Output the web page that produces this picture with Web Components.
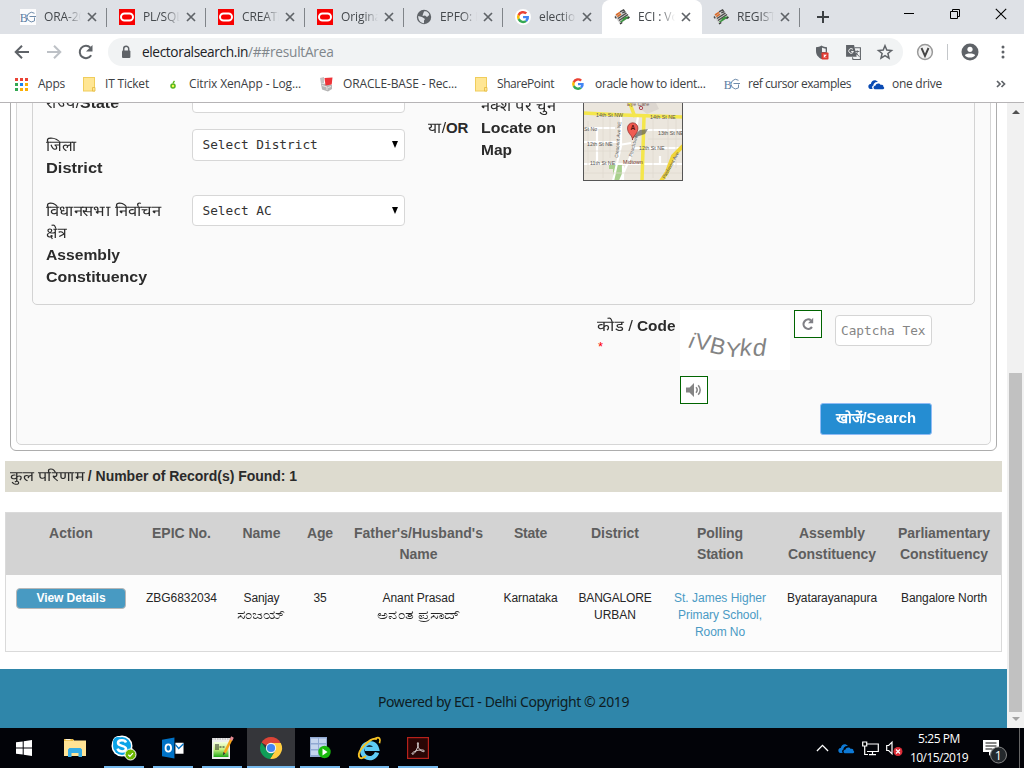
<!DOCTYPE html>
<html lang="en"><head><meta charset="utf-8"><title>Electoral Search</title>
<style>html,body{margin:0;height:100%;overflow:hidden;background:#fff}</style></head>
<body><desktop-screen></desktop-screen>
<script>
const UI='"Open Sans","Noto Sans",sans-serif', AR='"Liberation Sans",sans-serif';
function define(name, html, after){
  customElements.define(name, class extends HTMLElement{
    connectedCallback(){
      if(this.shadowRoot) return;
      const r=this.attachShadow({mode:'open'});
      r.innerHTML=typeof html==='function'?html(this):html;
      if(after) after(this,r);
    }
  });
}
// Text run set to a given advance width.
define('fit-text','<style>:host{display:inline-block;white-space:nowrap;text-align:left}span{display:inline-block;white-space:pre}</style><span><slot></slot></span>',(el,r)=>{
  const w=parseFloat(el.getAttribute('w')), s=r.querySelector('span');
  const n=Array.from(el.textContent).length;
  const nat=s.getBoundingClientRect().width;
  el.style.width=w+'px';
  if(!nat) return;
  if(el.hasAttribute('squeeze')){s.style.transformOrigin='0 50%';s.style.transform=`scaleX(${w/nat})`;}
  else s.style.letterSpacing=((w-nat)/Math.max(1,n))+'px';
});
const G=`<path fill="#ea4335" d="M3 7 1 4.500A8 8 0 0 1 13.300 2.200L11 4.500A4.800 4.800 0 0 0 3.700 6.200z"/><path fill="#fbbc05" d="M1 4.400A8 8 0 0 0 1 11.600L3.700 9.600A5 5 0 0 1 3.700 6.400z"/><path fill="#34a853" d="M1 11.500A8 8 0 0 0 13.200 14L10.600 12A4.800 4.800 0 0 1 3.700 9.500z"/><path fill="#4285f4" d="M8 6.600h7.600A8 8 0 0 1 13.200 14L10.600 12A4 4 0 0 0 12.200 9.700H8z"/>`;
const BC=`<rect width="16" height="16" fill="#fff" opacity=".9"/><text x="-.3" y="12.500" font-family="Liberation Serif,serif" font-size="13" fill="#5b7ba2" textLength="8" lengthAdjust="spacingAndGlyphs">B</text><path d="M14.500 4.300a4.700 4.700 0 1 0 0 7.600V8.500M9.500 7.500H16" fill="none" stroke="#6f8cab" stroke-width="1"/>`;
const IC={
 bc:['0 0 16 16',BC],
 oracle:['0 0 16 16','<rect width="16" height="16" fill="#f80000"/><rect x="2" y="4.500" width="12" height="7" rx="3.500" fill="none" stroke="#fff" stroke-width="2"/>'],
 globe:['0 0 16 16','<circle cx="8" cy="8" r="7.200" fill="#5f6368"/><path d="M8 2.500c3-.7 5 1.500 5.300 3.500L11 8 9 6.500 6.500 7l.5-2zM2.200 7l3.800 1 3 2-1 1.500v2.700C4.500 14 2 11 2.200 7z" fill="#dee1e6"/>'],
 google:['0 0 16 16','<circle cx="8" cy="8" r="8" fill="#fff"/><g transform="translate(1.800 1.800) scale(.78)">'+G+'</g>'],
 gplain:['0 0 16 16',G],
 eci:['0 0 16 16','<path d="M.5 7 10 .8 15.500 8 6 15z" fill="#cfcfcf"/><path d="M2 6 6 3.300M3.300 7.600 7 5.200" stroke="#d96b2b" stroke-width="1.600"/><path d="M6 2.800 9.500.8 10.500 2.200M1 7.500l1.200 1.800M8.300 3.800 11.500 2.600M4 9.500 12.500 4M5 11.500 14 5.500" stroke="#4a4a4a" stroke-width="1.400" fill="none"/><path d="M6.500 13.200 14.800 7.600M8.500 10.700l4-2.800" stroke="#3c9540" stroke-width="1.600"/><path d="M6 15l2.300-1.500M13.500 9.800 15.500 8" stroke="#333" stroke-width="1.300"/>'],
 close:['0 0 16 16','<path d="M4 4l8 8M12 4l-8 8" stroke="#5f6368" stroke-width="1.700"/>'],
 plus:['0 0 16 16','<path d="M8 2v12M2 8h12" stroke="#3c4043" stroke-width="2"/>'],
 min:['0 0 12 12','<path d="M1 5.500h10" stroke="#000"/>'],
 max:['0 0 12 12','<path d="M3.500 3.500v-2h7v7h-2M1.500 3.500h7v7h-7z" fill="none" stroke="#000"/>'],
 x:['0 0 12 12','<path d="M.8.8l10.400 10.400M11.200.8.8 11.200" stroke="#000" stroke-width="1.100"/>'],
 back:['0 0 16 16','<path d="M15 8H2M8 1.700 1.700 8 8 14.300" fill="none" stroke="#5f6368" stroke-width="2"/>'],
 fwd:['0 0 16 16','<path d="M1 8h13M8 1.700 14.300 8 8 14.300" fill="none" stroke="#bdc1c6" stroke-width="2"/>'],
 reload:['0 0 16 16','<path d="M13.200 11.300A6.200 6.200 0 1 1 12.400 3.600" fill="none" stroke="#5f6368" stroke-width="2"/><path d="M14.500 1v6.500H8z" fill="#5f6368"/>'],
 lock:['0 0 16 16','<rect x="4" y="6.500" width="8.400" height="7.500" rx="1" fill="#5f6368"/><path d="M5.700 7V4.800a2.500 2.500 0 0 1 5 0V7" fill="none" stroke="#5f6368" stroke-width="1.500"/>'],
 shield:['0 0 16 16','<path d="M7.500 1.500C9 2.800 11 3.200 13 3.200V7c0 4-2.500 6.500-5.500 8C4.500 13.500 2 11 2 7V3.200c2 0 4-.4 5.500-1.700z" fill="#5f6368"/><path d="M8 3.500c1 .7 2.500 1 3.700 1.200V8H8z" fill="#f1f3f4"/><rect x="7.500" y="8.500" width="7" height="7" rx=".8" fill="#e0392f"/><path d="M9.700 10.700l2.600 2.600M12.300 10.700l-2.600 2.600" stroke="#fff" stroke-width="1.100"/>'],
 translate:['0 0 16 16','<path d="M1 1h7.500l2.500 11H1z" fill="#5f6368"/><path d="M9 3.500h5.500v11H7.500L7 12.500" fill="none" stroke="#5f6368" stroke-width="1"/><path d="M7.500 5.200A2.200 2.200 0 1 0 7.900 7H5.800" fill="none" stroke="#fff" stroke-width=".9"/><path d="M9.500 7h4M11.500 6v1.200c0 2-1 3-2 4M10.500 8.500l3 3.500" stroke="#5f6368" stroke-width=".9" fill="none"/>'],
 star:['0 0 16 16','<path d="M8 1.800l1.800 4.300 4.700.4-3.600 3 1.100 4.600L8 11.700l-4 2.400 1.100-4.600-3.600-3 4.700-.4z" fill="none" stroke="#5f6368" stroke-width="1.500"/>'],
 vee:['0 0 18 18','<circle cx="9" cy="9" r="7.400" fill="#f2f2f2" stroke="#999" stroke-width="1.500"/><path d="M5.500 5 9 13 12.500 5" fill="none" stroke="#444" stroke-width="1.900"/>'],
 user:['0 0 18 18','<circle cx="9" cy="9" r="8.500" fill="#5f6368"/><circle cx="9" cy="6.300" r="2.600" fill="#fff"/><path d="M3.800 12.200c1-2.200 9.400-2.200 10.400 0-2 3.200-8.400 3.200-10.400 0z" fill="#fff"/>'],
 dots:['0 0 4 14','<circle cx="2" cy="2" r="1.500" fill="#5f6368"/><circle cx="2" cy="7" r="1.500" fill="#5f6368"/><circle cx="2" cy="12" r="1.500" fill="#5f6368"/>'],
 apps:['0 0 13 13','<path d="M0 0h3v3H0zM5 0h3v3H5zM10 0h3v3h-3z" fill="#ea4335"/><path d="M0 5h3v3H0z" fill="#34a853"/><path d="M5 5h3v3H5z" fill="#1a82f0"/><path d="M10 5h3v3h-3zM5 10h3v3H5zM10 10h3v3h-3z" fill="#fbaf05"/><path d="M0 10h3v3H0z" fill="#34a853"/>'],
 note:['0 0 13 15','<rect x=".5" y=".5" width="11" height="13.500" fill="#ffe694" stroke="#f0cd5c"/><path d="M9.500 14v-3.500h2.500V14z" fill="#ffe694" stroke="#e4b93c" stroke-width=".8"/>'],
 citrix:['0 0 8 12','<circle cx="4" cy="8" r="2" fill="#f4fa50" stroke="#55b51d" stroke-width="1.500"/><path d="M4 5 5.500 3" stroke="#55b51d" stroke-width="1.300"/>'],
 obase:['0 0 16 16','<path d="M1 2l4-1v6l-3 1z" fill="#c4c4c4"/><path d="M2 8l5-.5 6 1.500v4l-4 2.500L3 13.500z" fill="#b5b5b5"/><path d="M3 9.500l5 1.500v3M9 11.500l3-1" stroke="#e4e4e4" fill="none"/><path d="M5.500 2 13.500 1.500l-.8 7-6.200 1z" fill="#ee3338"/>'],
 cloud:['0 0 18 12','<path d="M1 10.500C-.5 8 1 6 3 6 3.500 2 8 .5 10.500 4c-3-.5-5 2-4.700 3.500C4 8 4 10 5 11.200H2z" fill="currentColor"/><path d="M7 11.500c-2-1-1-3.800.8-3.600C8.500 5 12 4.500 13.500 7c2.500-.5 3 1 2.800 2 1.500.7 1 2.500-.3 2.500z" fill="currentColor"/>'],
 more:['0 0 10 10','<path d="M1 2l3 3-3 3M5.500 2l3 3-3 3" stroke="#5f6368" stroke-width="1.700" fill="none"/>'],
 refresh:['0 0 14 14','<path d="M11 10A4.700 4.700 0 1 1 10 3.300" fill="none" stroke="#808086" stroke-width="2.200"/><path d="M12.200.8v5.500H7z" fill="#808086"/>'],
 sound:['0 0 18 16','<path d="M1 5.500h3.500L9 1v14l-4.500-4.500H1z" fill="#858585"/><path d="M11 5.300q2.400 2.700 0 5.400M13.200 3.200q4 4.800 0 9.600" fill="none" stroke="#858585" stroke-width="1.500"/>'],
 win:['0 0 16 16','<path d="M0 2.300 6.700 1.400V7.500H0zM7.700 1.200 16 0v7.500H7.700zM0 8.500h6.700v6.100L0 13.700zM7.700 8.500H16V16l-8.300-1.200z" fill="#fff"/>'],
 folder:['0 0 22 20','<path d="M0 1h9l1 1.500h12V18H0z" fill="#ffe394"/><path d="M0 1h9v2H0z" fill="#e9b93d"/><path d="M1.500 1.700h5" stroke="#fff"/><path d="M4 19v-7.500l1.500-1.500h11l1.500 1.500V19h-3.500v-4h-7v4z" fill="#35ade5"/>'],
 skype:['0 0 26 26','<circle cx="7.500" cy="7" r="6" fill="#fff"/><circle cx="11" cy="11" r="10.500" fill="#fff"/><circle cx="16" cy="16" r="6" fill="#fff"/><circle cx="7" cy="7" r="5" fill="#0aa4e8"/><circle cx="11" cy="11" r="9" fill="#0aa4e8"/><path d="M15 7.500C14 4.500 7 4.500 7 8c0 3.700 8 2 8 5.700 0 3.600-7.500 3.600-8.500 0" fill="none" stroke="#fff" stroke-width="2.500"/><circle cx="19.500" cy="19.500" r="5.500" fill="#6bb700" stroke="#fff" stroke-width="1"/><path d="M17.300 19.800l1.600 1.500 3-3.200" fill="none" stroke="#fff" stroke-width="1.200"/>'],
 outlook:['0 0 23 22','<path d="M0 2.500 13 0v22L0 19.500z" fill="#0072c6"/><ellipse cx="6.600" cy="11" rx="2.900" ry="3.700" fill="none" stroke="#fff" stroke-width="1.900"/><path d="M14 5.500h8.500v11.500H14z" fill="#fff"/><path d="M14 7.500l3.500 4 5-5" fill="none" stroke="#0072c6" stroke-width="1.400"/>'],
 npp:['0 0 24 24','<defs><linearGradient id="g" x2="0" y2="1"><stop offset="0" stop-color="#f5ffe0"/><stop offset=".5" stop-color="#c6f080"/><stop offset="1" stop-color="#20a818"/></linearGradient></defs><path d="M2 2h18v21H2z" fill="#eee"/><path d="M3.500 6h15v15h-15z" fill="url(#g)"/><path d="M2 3h18" stroke="#ccc" stroke-width="2" stroke-dasharray="1.500 1"/><path d="M6 8v6M8 8v6" stroke="#222"/><path d="M9.500 11h2M12.500 11h2" stroke="#222"/><path d="M21.500 3 14.500 17" stroke="#f6a41c" stroke-width="2.700"/><path d="M22.500 1 21 4" stroke="#e78b94" stroke-width="3"/><path d="M13.400 16l2 1.200-2.500 2.300z" fill="#333"/>'],
 chrome:['0 0 22 22','<path d="M11 11 1.500 5.500A11 11 0 0 1 20.500 5.500z" fill="#db4437"/><path d="M11 6h9.800A11 11 0 0 1 10 22l5.300-8.500z" fill="#ffcd40"/><path d="M1.500 5.500A11 11 0 0 0 10 22l5.300-8.500H7z" fill="#0f9d58"/><circle cx="11" cy="11" r="5.200" fill="#f1f1f1"/><circle cx="11" cy="11" r="4.100" fill="#4285f4"/>'],
 server:['0 0 22 22','<path d="M1 0h17v20H1z" fill="#91a9d2"/><path d="M2 1.500h7v4.500H2zM10 1.500h7v4.500h-7zM2 7.500h7v4.500H2zM10 7.500h7v4.500h-7zM2 13.500h7V18H2z" fill="#c5d5ee"/><circle cx="15.500" cy="15" r="6.200" fill="#19ba0d"/><path d="M13.500 11.500v7l5-3.500z" fill="#fff"/>'],
 ie:['0 0 24 24','<path d="M20 16.500A7.500 7.500 0 1 1 20 12.800H8" fill="none" stroke="#5ecbf5" stroke-width="4.300"/><path d="M20 3.200C14 0 0 15 2 20.500c1 3 4.500 1.500 7-.5" fill="none" stroke="#f5c225" stroke-width="2"/><path d="M18.500 2.200c4-2 5.500 1 4 5" fill="none" stroke="#f5c225" stroke-width="1.700"/>'],
 pdf:['0 0 22 22','<rect x=".6" y=".6" width="20.800" height="20.800" fill="#290605" stroke="#b7211a" stroke-width="1.200"/><path d="M5 17c-.5-1.600 4.500-3.700 8-4 3.600-.3 4.500.5 4.300 1.300-1 1.200-4.500-1-5.800-3.700C10.300 8 10 5.500 11 5.500c1.300.5-.2 4.800-1.800 7.800-1.200 2.500-2.900 4.500-4.200 3.700z" fill="none" stroke="#e4dedd" stroke-width="1"/>'],
 chevron:['0 0 14 8','<path d="M1 7.200 7 1.200 13 7.200" fill="none" stroke="#fff" stroke-width="1.400"/>'],
 net:['0 0 17 15','<path d="M4 3h12.300v7.500H5M10.500 10.500V14M7 13.700h7" fill="none" stroke="#fff" stroke-width="1.200"/><path d="M.7 1h4v4h-4zM2.700 5v8.500H6" fill="#000" stroke="#fff" stroke-width="1.200"/>'],
 mute:['0 0 17 15','<path d="M.7 4.500h2L6 1.200v11.600L2.700 9.500h-2z" fill="none" stroke="#fff" stroke-width="1.200"/><circle cx="12" cy="10.500" r="4.500" fill="#dc2b36"/><path d="M10 8.500l4 4M14 8.500l-4 4" stroke="#fff" stroke-width="1.200"/>'],
 bell:['0 0 26 26','<path d="M1 5h16v12H10l-3 4v-4H1z" fill="#fff"/><path d="M3.500 8h11M3.500 11h11M3.500 14h7" stroke="#111" stroke-width="1.100"/><circle cx="16.500" cy="20" r="8" fill="#24282c" stroke="#858585" stroke-width="1"/><text x="16.400" y="24.500" text-anchor="middle" font-family="Open Sans,sans-serif" font-size="12.500" fill="#fff">1</text>']
};
define('ui-icon',el=>{
  const [vb,p]=IC[el.getAttribute('name')];const w=el.getAttribute('w'),h=el.getAttribute('h')||w;
  return `<style>:host{display:block;flex:none;width:${w}px;height:${h}px}svg{display:block;overflow:visible}</style><svg width="${w}" height="${h}" viewBox="${vb}">${p}</svg>`;
});
define('browser-tab',el=>{const a=el.hasAttribute('active');return `
<style>:host{display:flex;box-sizing:border-box;width:99px;height:34px;align-items:center;padding-left:12px;position:relative;font:12px/18px ${UI};color:#45494d;${a?'background:#fff;border-radius:8px 8px 0 0;box-shadow:1px 0 #fff;':''}}
.t{width:37px;margin-left:8px;overflow:hidden;-webkit-mask:linear-gradient(90deg,#000 60%,transparent);white-space:nowrap;letter-spacing:-.1px}
ui-icon{margin-left:3px}ui-icon:first-of-type{margin:0}
i{position:absolute;right:0;top:8px;width:1px;height:19px;background:#808489}</style>
<ui-icon name="${el.getAttribute('icon')}" w="16"></ui-icon><div class="t"><slot></slot></div><ui-icon name="close" w="16"></ui-icon>${el.hasAttribute('sep')?'<i></i>':''}`});
define('tab-strip',`<style>:host{display:flex;height:34px;background:#dee1e6;padding-left:8px;align-items:center}
.p{margin-left:15px}.m{margin-left:72px}.r{margin-left:34px}.x{margin-left:34px}.m,.r,.x{margin-top:-6px}</style>
<browser-tab icon="bc" sep>ORA-20</browser-tab><browser-tab icon="oracle" sep>PL/SQL</browser-tab><browser-tab icon="oracle" sep>CREATE</browser-tab><browser-tab icon="oracle" sep>Original</browser-tab><browser-tab icon="globe" sep>EPFO: F</browser-tab><browser-tab icon="google">election</browser-tab><browser-tab icon="eci" active>ECI : Vot</browser-tab><browser-tab icon="eci" sep>REGIST</browser-tab>
<ui-icon class="p" name="plus" w="16"></ui-icon><ui-icon class="m" name="min" w="12"></ui-icon><ui-icon class="r" name="max" w="12"></ui-icon><ui-icon class="x" name="x" w="12"></ui-icon>`);
define('tool-bar',`<style>:host{display:flex;height:36px;align-items:center;background:#fff;padding-left:14px;font:13.700px/20px ${UI}}
.g{margin-left:16px}.o{display:flex;align-items:center;box-sizing:border-box;width:795px;height:28px;border-radius:14px;background:#f1f3f4;margin-left:14px;padding-left:10px}
.u{margin-left:8px;color:#202124;white-space:nowrap}.s{margin-left:auto;display:flex;gap:15px;padding-right:10px}.u span{color:#80868b}
.v{margin-left:13px}i{width:1px;height:16px;background:#c4c7ca;margin:0 13px}.d{margin-left:22px}</style>
<ui-icon name="back" w="16"></ui-icon><ui-icon class="g" name="fwd" w="16"></ui-icon><ui-icon class="g" name="reload" w="16"></ui-icon>
<div class="o"><ui-icon name="lock" w="16"></ui-icon><div class="u"><fit-text w="106">electoralsearch.in</fit-text><span><fit-text w="85.500">/##resultArea</fit-text></span></div>
<div class="s"><ui-icon name="shield" w="16"></ui-icon><ui-icon name="translate" w="17"></ui-icon><ui-icon name="star" w="16"></ui-icon></div></div>
<ui-icon class="v" name="vee" w="18"></ui-icon><i></i><ui-icon name="user" w="18"></ui-icon><ui-icon class="d" name="dots" w="4" h="14"></ui-icon>`);
const marks=[['apps',15,13,13,10,'Apps',27],['note',18,13,15,9,'IT Ticket',44],['citrix',20,8,12,12,'Citrix XenApp - Log...',112],['obase',18,16,16,8,'ORACLE-BASE - Rec...',114],['note',18,13,15,9,'SharePoint',57],['gplain',18,12,12,11,'oracle how to ident...',110.5],['bc',18,16,16,8.5,'ref cursor examples',103],['cloud',17,17,12,7,'one drive',50]];
define('bookmark-bar',`<style>:host{display:flex;height:32px;align-items:center;background:#fff;border-bottom:1px solid #b6b4b6;font:12px/18px ${UI};color:#3c4043;padding-bottom:0}
fit-text{margin-top:-4px}ui-icon{margin-top:-4px}ui-icon[name=cloud]{color:#0a4bb3}ui-icon[name=more]{margin-left:54px}</style>`+marks.map(m=>`<ui-icon name="${m[0]}" w="${m[2]}" h="${m[3]}" style="margin-left:${m[1]}px"></ui-icon><fit-text w="${m[6]}" style="margin-left:${m[4]}px">${m[5]}</fit-text>`).join('')+`<ui-icon name="more" w="10"></ui-icon>`);
define('select-box',`<style>:host{display:flex;box-sizing:border-box;width:213px;height:31px;border:1px solid #d7d7d7;border-radius:4px;background:#fff;align-items:center;justify-content:space-between;padding:0 6px 0 9.500px;font:12.780px/20px "DejaVu Sans Mono",monospace;color:#333}
i{border:3.500px solid transparent;border-top:7px solid #000;border-bottom:0;margin-top:-1px}</style><span><slot></slot></span><i></i>`);
define('street-map',`<style>:host{display:block;width:100px;height:100px}svg{display:block}</style>
<svg width="100" height="100" viewBox="0 0 100 100"><rect width="100" height="100" fill="#ebe6dd"/><path d="M55 20l15-4 6 12-12 5-9-7z" fill="#dcd6cf"/><path d="M26 83h13v17h-9V88h-4z" fill="#a9d08e"/>
<g stroke="#fff" stroke-width="2.200" fill="none"><path d="M0 47h32M0 61h35M0 83h100M14 47v36M38 35v30l-8 35M55 36l-6 36-12 28M62 49h38M50 67h50M48 62l-12 2M77 75v8M40 85v15"/></g>
<g stroke="#dfd9d0" stroke-width=".8" fill="none"><path d="M5 40v50M20 37v60M27 37v40M70 37v60M85 37v60M93 37v50M0 70h60M0 92h100M65 58h35"/></g>
<path d="M0 32l40 2 60 2" stroke="#f4e64c" stroke-width="3.500" fill="none"/><path d="M44 15l8 21M61 36l-2 64" stroke="#f4e64c" stroke-width="3.500" fill="none"/><path d="M100 65 90 75l-6 16-6 9" stroke="#efd637" stroke-width="4" fill="none"/>
<path d="M49 56l8-7 8-1-3 5-12 4z" fill="#555" opacity=".65"/><path d="M49.500 59c0-5-5-6-5-12a5.200 5.200 0 0 1 10.400 0c0 6-4.600 7-5.400 12z" fill="#f15b52" stroke="#8b2723" stroke-width=".7"/>
<g font-family="Liberation Sans,sans-serif" font-size="5.300" fill="#555"><text x="47.600" y="48.800" font-size="6.500" font-weight="bold" fill="#531510">A</text><text x="13" y="35.500">14th St NW</text><text x="67" y="38">14th St NE</text><text x="1" y="49.500">St No</text><text x="75" y="53.500">13th St NE</text><text x="4" y="65">12th St NE</text><text x="56" y="69">12th St NE</text><text x="7" y="83.500">11th St NE</text><text x="40" y="83" fill="#6d302a">Midtown</text><text x="44" y="25" fill="#77605b">Eye Care</text><text transform="translate(35 77)rotate(-85)" font-size="4.800">Crescent Ave NE</text><text transform="translate(49 76)rotate(-75)" font-size="4.800">Peachtree</text><text transform="translate(82 98)rotate(-61)" font-size="4.800">Piedmont Ave</text></g>
<circle cx="58" cy="27" r="1.700" fill="none" stroke="#b04b56"/><rect x=".5" y=".5" width="99" height="99" fill="none" stroke="#555"/></svg>`);
define('area-fieldset',`<style>:host{display:flex;box-sizing:border-box;width:943px;height:254px;border:1px solid #d3d3d3;border-radius:5px;padding-left:13px;font:15px/22px ${AR};color:#2b2b2b}
b{font-weight:bold;white-space:nowrap}b,fit-text{vertical-align:top}.l{width:146px}.l div{margin-bottom:21px}.l{padding-top:40px}.l div:nth-child(2){margin-top:20px}
.s{display:flex;flex-direction:column;padding-top:30px;width:213px}select-box+select-box{margin-top:16px;height:32px}.s select-box:last-child{margin-top:34px;height:31px}
.o{padding:65px 0 0 23px;box-sizing:border-box;white-space:nowrap;width:76px}.m{padding-top:43px;width:102px}.p{padding-top:29px}</style>
<div class="l"><div><fit-text w="73" squeeze>राज्य/<b>State</b></fit-text></div><div><fit-text w="30.500" squeeze>जिला</fit-text><br><b><fit-text w="56.500" squeeze>District</fit-text></b></div><div><fit-text w="115" squeeze>विधानसभा निर्वाचन</fit-text><br><fit-text w="20" squeeze>क्षेत्र</fit-text><br><b><fit-text w="74" squeeze>Assembly</fit-text><br><fit-text w="101" squeeze>Constituency</fit-text></b></div></div>
<div class="s"><select-box></select-box><select-box>Select District</select-box><select-box>Select AC</select-box></div>
<div class="o"><fit-text w="18" squeeze>या/</fit-text><b><fit-text w="22">OR</fit-text></b></div>
<div class="m"><fit-text w="75" squeeze>नक्शे पर चुनें</fit-text><br><b><fit-text w="75" squeeze>Locate on</fit-text><br><fit-text w="31" squeeze>Map</fit-text></b></div><div class="p"><street-map></street-map></div>`);
define('captcha-row',`<style>:host{display:flex;height:139px;box-sizing:border-box;padding:5px 0 0 580px;font:15px/22px ${AR};color:#2b2b2b}
.a{width:83px;padding-top:5px;white-space:nowrap;box-sizing:border-box}.a fit-text{vertical-align:top}.r{color:red;font:13px/20px ${AR};padding-left:1px}
.c{width:110px}.im{display:block;width:110px;height:60px;background:#fff}.b{box-sizing:border-box;width:28px;height:28px;border:1px solid #006400;background:#fff;display:flex;align-items:center;justify-content:center}.c .b{margin-top:6px}.f{margin-left:4px}
.e{width:112px;margin-left:-2px;display:flex;flex-direction:column;align-items:flex-end;padding-top:5px}.in{box-sizing:border-box;width:97px;height:31px;border:1px solid #d5d5d5;border-radius:4px;background:#fff;padding:5px 0 0 5px;font:12.780px/19px "DejaVu Sans Mono",monospace;color:#858585;white-space:nowrap;overflow:hidden}
.go{box-sizing:border-box;width:112px;height:32px;margin-top:57px;border:1.500px solid #8fbbf5;border-radius:3px;background:#258dd2;color:#fff;font:bold 14px/28px ${AR};text-align:center;white-space:nowrap}</style>
<div class="a"><fit-text w="36" squeeze>कोड /</fit-text> <b><fit-text w="38.500" squeeze>Code</fit-text></b><div class="r">*</div></div>
<div class="c"><svg class="im" viewBox="0 0 110 60" fill="#838383" font-family="Liberation Sans,sans-serif" font-size="24"><text transform="translate(8 37.500)rotate(12)" font-style="italic" font-size="22">i</text><text transform="translate(14.500 38.500)rotate(9) scale(.95 .95)">V</text><text transform="translate(28.500 42)rotate(14)" font-size="23">B</text><text transform="translate(45 46)rotate(6) scale(.95 .85)">Y</text><text transform="translate(60 46)rotate(-3)" font-style="italic" font-size="24">k</text><text transform="translate(73 46)rotate(-2)" font-style="italic" font-size="24">d</text></svg><div class="b"><ui-icon name="sound" w="18" h="16"></ui-icon></div></div>
<div class="f"><div class="b"><ui-icon name="refresh" w="14"></ui-icon></div></div>
<div class="e"><div class="in">Captcha Tex</div><div class="go"><fit-text w="80" squeeze>खोजें/Search</fit-text></div></div>`);
define('search-form',`<style>:host{display:block;box-sizing:border-box;width:987px;margin:0 0 0 10px;border:1px solid #adadad;border-radius:6px;padding:0 5px 5px;background:#fff}
div{box-sizing:border-box;background:#fafafa;border:1px solid #d6d6d6;border-radius:5px;padding-left:0}area-fieldset{margin-left:15px;margin-top:20px}</style><div><area-fieldset></area-fieldset><captcha-row></captcha-row></div>`);
const H=[['Action',44],['EPIC No.',59],['Name',38],['Age',26],["Father's/Husband's",129,'Name',38],['State',33],['District',48],['Polling',46,'Station',46],['Assembly',66,'Constituency',88],['Parliamentary',92,'Constituency',88]];
const R=[null,['ZBG6832034',71],['Sanjay',36,'ಸಂಜಯ್',49],['35',13],['Anant Prasad',72,'ಅನಂತ ಪ್ರಸಾದ್',84],['Karnataka',54],['BANGALORE',73,'URBAN',42],['St. James Higher',92,'Primary School,',84,'Room No',50],['Byatarayanapura',90],['Bangalore North',86]];
const lines=a=>{let o='';for(let i=0;i<a.length;i+=2)o+=`<p><fit-text w="${a[i+1]}"${/[^\x00-\x7f]/.test(a[i])?' squeeze':''}>${a[i]}</fit-text></p>`;return o};
define('result-table',`<style>:host{display:block;box-sizing:border-box;width:997px;height:140px;margin:20px 0 17px 5px;border:1px solid #dadada;background:#fcfcfc;font-family:${AR}}
.h,.r{display:grid;grid-template-columns:130px 91px 69px 48px 149px 75px 94px 116px 108px 116px;text-align:center}.h{background:#d3d3d3;height:62px;box-sizing:border-box;padding-top:10px;font-weight:bold;font-size:14px;color:#5e5e5e;line-height:21px}
.r{padding-top:15px;font-size:12px;line-height:17px;color:#262626}p{margin:0;height:1lh}fit-text{vertical-align:top}.r div:nth-child(8){color:#4a9ac4}
.v{width:110px;height:21px;box-sizing:border-box;border:1px solid #b7b7b7;border-radius:4px;background:#489ac2;color:#fff;font-weight:bold;line-height:18px;margin:-2px auto 0}</style>
<div class="h">${H.map(a=>'<div>'+lines(a)+'</div>').join('')}</div><div class="r">${R.map(a=>a?'<div>'+lines(a)+'</div>':'<div><div class="v"><fit-text w="69">View Details</fit-text></div></div>').join('')}</div>`);
define('page-view',`<style>:host{display:flex;height:625px;overflow:hidden;background:#fff}
.p{width:1007px;display:flex;flex-direction:column;justify-content:flex-end;height:625px;overflow:hidden}.p>*{flex:none}
.n{margin:10px 0 0 5px;width:997px;height:31px;background:#dddbcf;box-sizing:border-box;padding-left:5px;font:bold 14px/31px ${AR};color:#2a2a2a;white-space:nowrap}.n fit-text{vertical-align:top}
.f{height:59px;background:#2f86aa;text-align:center;font:14px/66px "Noto Sans",${UI};color:#0e1c22}
.s{width:17px;box-sizing:border-box;background:#f1f1f1;display:flex;flex-direction:column;align-items:center}.s i{border:4px solid transparent}.u{border-bottom-color:#505050!important;border-top:0!important;margin-top:7px}.t{width:13px;height:339px;background:#c1c1c1;margin-top:259px}.d{border-top-color:#a3a3a3!important;border-bottom:0!important;margin-top:5px}</style>
<div class="p"><search-form></search-form><div class="n"><fit-text w="74" squeeze style="font-weight:normal">कुल परिणाम</fit-text><fit-text w="213"> / Number of Record(s) Found: 1</fit-text></div><result-table></result-table><div class="f"><fit-text w="251">Powered by ECI - Delhi Copyright © 2019</fit-text></div></div>
<div class="s"><i class="u"></i><div class="t"></div><i class="d"></i></div>`);
define('task-item',el=>`<style>:host{display:flex;flex:none;width:48px;height:40px;box-sizing:border-box;align-items:center;justify-content:center;position:relative;${el.hasAttribute('on')?'background:#35363a':''}}
i{position:absolute;bottom:0;height:2px;left:${el.hasAttribute('on')?0:4}px;right:${el.hasAttribute('on')?0:4}px;background:#76b9ed}</style><slot></slot>${el.hasAttribute('run')?'<i></i>':''}`);
define('task-bar',`<style>:host{display:flex;height:40px;background:#020308;align-items:center;color:#fff;font:12px/19px ${UI}}
.st{width:51px;flex:none;padding-left:16px;box-sizing:border-box}task-item{margin-right:1px}.ch{margin-left:373px}.cl{flex:none;width:64px;text-align:center;margin-left:4px}.cl fit-text{vertical-align:top}.l{flex:none;width:1px;height:40px;background:#666;margin-left:11px}.oc{color:#0e7ad6;margin-left:9px}</style>
<div class="st"><ui-icon name="win" w="16"></ui-icon></div>
<task-item><ui-icon name="folder" w="22" h="20"></ui-icon></task-item><task-item run><ui-icon name="skype" w="26"></ui-icon></task-item><task-item run><ui-icon name="outlook" w="22"></ui-icon></task-item><task-item run><ui-icon name="npp" w="24"></ui-icon></task-item><task-item run on><ui-icon name="chrome" w="22"></ui-icon></task-item><task-item run><ui-icon name="server" w="22"></ui-icon></task-item><task-item run><ui-icon name="ie" w="24"></ui-icon></task-item><task-item run><ui-icon name="pdf" w="22"></ui-icon></task-item>
<ui-icon class="ch" name="chevron" w="13" h="8"></ui-icon><ui-icon class="oc" name="cloud" w="17" h="12"></ui-icon><ui-icon name="net" w="17" h="15" style="margin-left:7px"></ui-icon><ui-icon name="mute" w="17" h="15" style="margin-left:7px"></ui-icon>
<div class="cl"><fit-text w="42">5:25 PM</fit-text><br><fit-text w="58">10/15/2019</fit-text></div><ui-icon name="bell" w="26" style="margin-left:11px"></ui-icon><div class="l"></div>`);
define('desktop-screen',`<style>:host{display:flex;flex-direction:column;width:1024px;height:768px;overflow:hidden}:host>*{flex:none}</style><tab-strip></tab-strip><tool-bar></tool-bar><bookmark-bar></bookmark-bar><page-view></page-view><task-bar></task-bar>`);
</script></body></html>
